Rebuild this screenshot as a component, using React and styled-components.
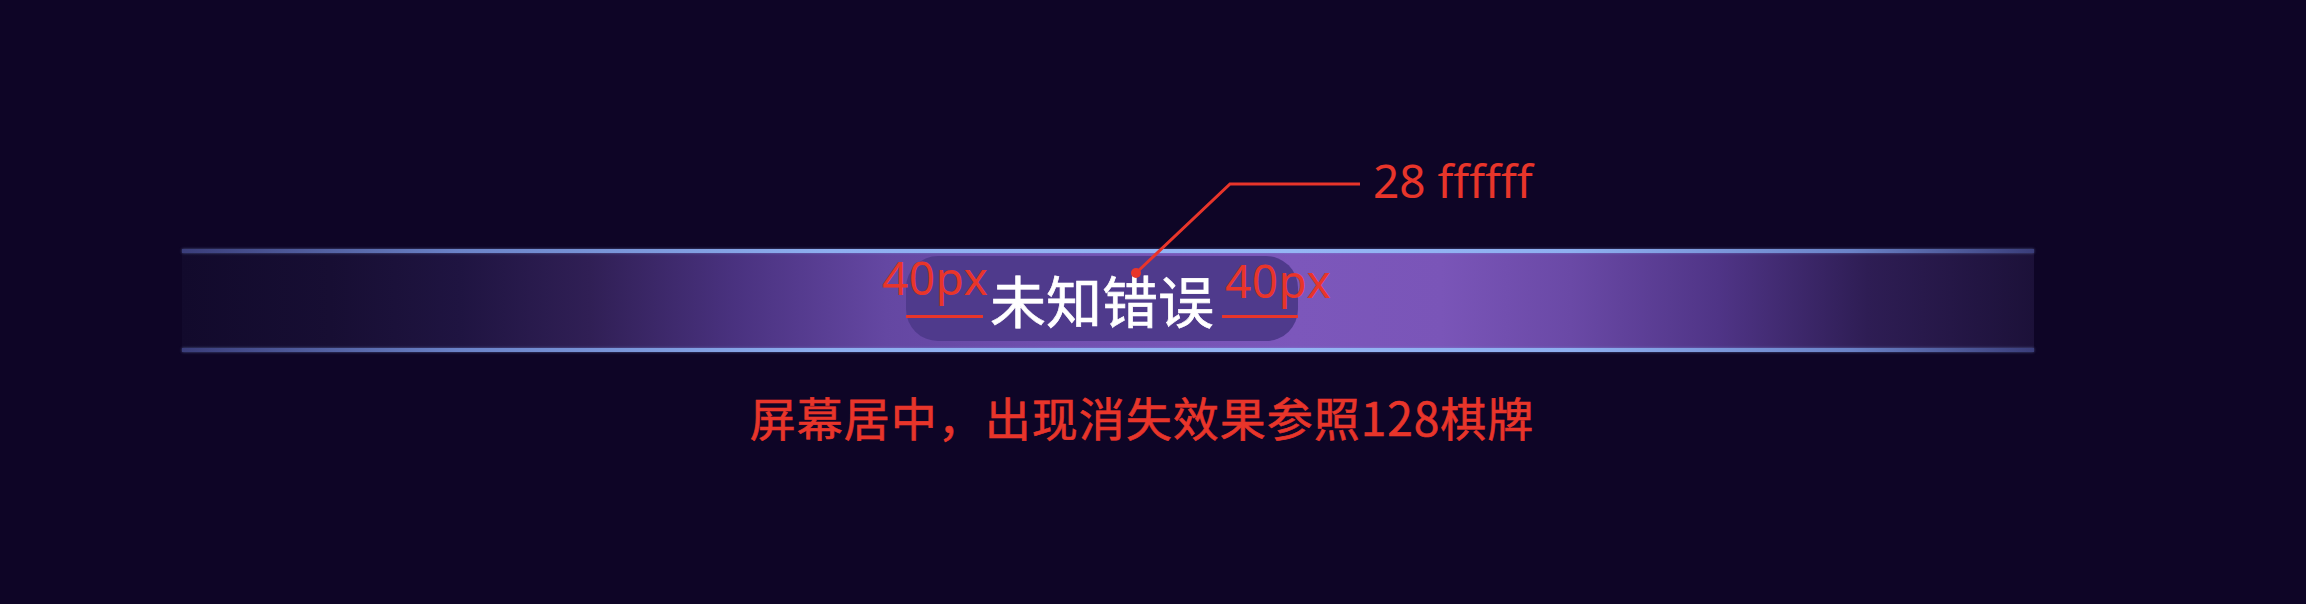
import React from 'react';
import styled, { createGlobalStyle } from 'styled-components';

const GlobalStyle = createGlobalStyle`
  html, body {
    margin: 0;
    padding: 0;
    background: #0e0526;
  }
  body {
    font-family: 'Noto Sans CJK SC', 'Noto Sans', sans-serif;
    text-spacing-trim: space-all;
  }
`

const Page = styled.div`
  width: 100%;
  min-height: 100vh;
  background: #0e0526;
  padding-top: 249px;
  box-sizing: border-box;
  overflow: hidden;
`

const Banner = styled.div`
  position: relative;
  margin: 0 272px 0 182px;
  height: 103px;
  display: flex;
  align-items: center;
  justify-content: center;
  padding: 0 12px 4px 0;
  box-sizing: border-box;
  background: linear-gradient(90deg,
    #120a2c 0%,
    #170e33 8%,
    #1f1441 15%,
    #301f55 22%,
    #4a3280 30%,
    #6447a2 38%,
    #7250b0 48%,
    #7c57bb 60%,
    #7a55b8 68%,
    #6a49a6 75%,
    #4f3486 83%,
    #2e1d54 91%,
    #1c1139 100%);

  &::before,
  &::after {
    content: '';
    position: absolute;
    left: 0;
    right: 0;
    height: 4px;
    background: linear-gradient(90deg,
      #3a3d7a 0%,
      #6b83c8 15%,
      #8eaff0 35%,
      #95b5f4 60%,
      #8eaff0 75%,
      #6b83c8 90%,
      #3a3d7a 100%);
    box-shadow: 0 0 3px rgba(140, 170, 240, 0.5);
  }
  &::before { top: 0; }
  &::after { bottom: 0; }
`

const Pill = styled.div`
  position: relative;
  display: flex;
  height: 85px;
  border-radius: 32px;
  background: #4f3a8c;
`

const Message = styled.span`
  color: #ffffff;
  font-size: 56px;
  line-height: 85px;
  -webkit-text-stroke: 0.7px #ffffff;
  white-space: nowrap;
`

const Spacing = styled.div`
  width: 84px;
  display: flex;
  flex-direction: column;
  align-items: flex-start;
  padding-top: ${p => p.top}px;
  box-sizing: border-box;
`

const Label = styled.span`
  margin-left: ${p => p.shift}px;
  color: #e8352a;
  font-family: 'Noto Sans', sans-serif;
  font-size: 46px;
  line-height: 42px;
  letter-spacing: 0.5px;
  white-space: nowrap;
`

const Rule = styled.span`
  margin: ${p => p.gap}px 0 0 ${p => p.indent}px;
  width: ${p => p.width}px;
  height: 3px;
  background: #e8352a;
`

const Leader = styled.svg`
  position: absolute;
  left: 225px;
  top: -75px;
  overflow: visible;
`

const Callout = styled.span`
  position: absolute;
  left: 467px;
  top: -98px;
  color: #e8352a;
  font-family: 'Noto Sans', sans-serif;
  font-size: 46px;
  line-height: 44px;
  white-space: nowrap;
`

const Caption = styled.div`
  margin-top: 42px;
  padding-right: 22px;
  text-align: center;
  color: #e8352a;
  font-size: 46px;
  line-height: 44px;
  letter-spacing: 1px;
  -webkit-text-stroke: 0.6px #e8352a;
  white-space: nowrap;
`

function Gap({ top, shift, gap, indent, width }) {
  return (
    <Spacing top={top}>
      <Label shift={shift}>40px</Label>
      <Rule gap={gap} indent={indent} width={width} />
    </Spacing>
  );
}

export default function App() {
  return (
    <Page>
      <GlobalStyle />
      <Banner>
        <Pill>
          <Gap top={-5} shift={-24} gap={17} indent={0} width={77} />
          <Message>未知错误</Message>
          <Gap top={3} shift={11} gap={14} indent={8} width={76} />
          <Leader width="240" height="100" viewBox="0 0 240 100">
            <polyline points="5,92 99,3 229,3" fill="none" stroke="#e8352a" strokeWidth="3" />
            <circle cx="5" cy="92" r="5" fill="#e8352a" />
          </Leader>
          <Callout>28 ffffff</Callout>
        </Pill>
      </Banner>
      <Caption>屏幕居中，出现消失效果参照128棋牌</Caption>
    </Page>
  );
}
